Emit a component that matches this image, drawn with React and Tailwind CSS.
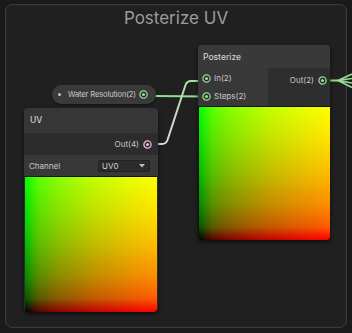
import React from "react";

const previewBg =
  "bg-[linear-gradient(to_right,#000_0%,rgb(89,0,0)_10%,rgb(137,0,0)_25%,rgb(188,0,0)_50%,rgb(225,0,0)_75%,#f00_100%),linear-gradient(to_top,#000_0%,rgb(0,89,0)_10%,rgb(0,137,0)_25%,rgb(0,188,0)_50%,rgb(0,225,0)_75%,#0f0_100%)] bg-blend-screen";

function Port({ color, className = "" }) {
  return (
    <svg width="9" height="9" viewBox="0 0 9 9" className={className}>
      <circle cx="4.5" cy="4.5" r="3.6" fill="#262626" stroke={color} strokeWidth="1.3" />
      <circle cx="4.5" cy="4.5" r="1.6" fill={color} />
    </svg>
  );
}

export default function App() {
  const font = { fontFamily: "Inter, 'Liberation Sans', sans-serif" };
  return (
    <div className="relative w-[352px] h-[333px] overflow-hidden bg-[#1a1a1a]" style={font}>
      {/* group frame */}
      <div className="ml-[5px] mt-[4px] w-[342px] h-[324px] rounded-[7px] border border-[#3b3b3b] bg-[#202020] shadow-[inset_0_0_0_1px_#262626]">
        <div className="pt-[2px] text-center text-[17px] leading-[22px] text-[#9c9c9c]">Posterize UV</div>
      </div>

      {/* wires */}
      <svg className="absolute left-0 top-0" width="352" height="333" viewBox="0 0 352 333">
        <defs>
          <linearGradient id="uvw" x1="150" y1="145" x2="205" y2="81" gradientUnits="userSpaceOnUse">
            <stop offset="0" stopColor="#e9d6e8" />
            <stop offset="1" stopColor="#9ee39c" />
          </linearGradient>
        </defs>
        <path d="M155 96 L205 96.5" stroke="#93dc93" strokeWidth="2" fill="none" />
        <path
          d="M150 144 H162 Q166 144 167.5 140 L185.5 85 Q187 81 191 81 H205"
          stroke="url(#uvw)"
          strokeWidth="2"
          fill="none"
        />
        <path d="M325 80.5 H339" stroke="#93dc93" strokeWidth="2" fill="none" />
        <path d="M338 80.5 L352 74 M338 80.5 L352 78.5 M338 80.5 L352 83 M338 80.5 L352 87.5" stroke="#93dc93" strokeWidth="1.6" fill="none" />
      </svg>

      {/* Water Resolution property */}
      <div className="absolute left-[52px] top-[85px] w-[104px] h-[19px] rounded-full bg-[#3a3a3a] flex items-center pl-[6px] pr-[8px] shadow-[0_1px_2px_rgba(0,0,0,0.5)]">
        <div className="w-[3px] h-[3px] rounded-full bg-[#9fe39c]" />
        <span className="ml-[7px] text-[7.6px] text-[#c8c8c8] tracking-[-0.15px] whitespace-nowrap">Water Resolution(2)</span>
        <Port color="#93dc93" className="ml-auto" />
      </div>

      {/* Posterize node */}
      <div className="absolute left-[198px] top-[45px] w-[132px] rounded-[4px] bg-[#2e2e2e] shadow-[0_2px_4px_rgba(0,0,0,0.6)]">
        <div className="h-[23px] rounded-t-[4px] bg-[#393939] flex items-center pl-[5px] pt-[1px] text-[8.5px] text-[#cfcfcf] font-medium">
          Posterize
        </div>
        <div className="flex h-[38px]">
          <div className="w-[70px] bg-[#383838] flex flex-col justify-center gap-[6px] pl-[4px]">
            <div className="flex items-center gap-[3px]">
              <Port color="#93dc93" />
              <span className="text-[8px] text-[#c8c8c8]">In(2)</span>
            </div>
            <div className="flex items-center gap-[3px]">
              <Port color="#93dc93" />
              <span className="text-[8px] text-[#c8c8c8]">Steps(2)</span>
            </div>
          </div>
          <div className="flex-1 bg-[#2e2e2e] flex items-start justify-end pt-[8px] pr-[3px] gap-[4px]">
            <span className="text-[8px] text-[#c8c8c8] leading-[9px]">Out(2)</span>
            <Port color="#93dc93" />
          </div>
        </div>
        <div className={`h-[134px] rounded-b-[4px] border-t border-l border-[#111] ${previewBg}`} />
      </div>

      {/* UV node */}
      <div className="absolute left-[24px] top-[108px] w-[134px] rounded-[4px] bg-[#2d2d2d] shadow-[0_2px_4px_rgba(0,0,0,0.6)]">
        <div className="h-[25px] rounded-t-[4px] bg-[#363636] flex items-center pl-[6px] text-[8.5px] text-[#cfcfcf] font-medium">
          UV
        </div>
        <div className="h-[22px] bg-[#2c2c2c] flex items-center justify-end pr-[6px] gap-[4px]">
          <span className="text-[8px] text-[#c8c8c8]">Out(4)</span>
          <Port color="#e8b8e2" />
        </div>
        <div className="h-[21px] bg-[#383838] flex items-center pl-[5px] pr-[8px]">
          <span className="text-[8px] text-[#c8c8c8]">Channel</span>
          <div className="ml-auto w-[52px] h-[12px] rounded-[2px] bg-[#2b2b2b] border border-[#232323] flex items-center pl-[3px] pr-[4px]">
            <span className="text-[8px] text-[#cfcfcf]">UV0</span>
            <svg width="6" height="4" viewBox="0 0 6 4" className="ml-auto">
              <path d="M0 0 H6 L3 3.5 Z" fill="#bdbdbd" />
            </svg>
          </div>
        </div>
        <div className={`h-[136px] mx-[1px] rounded-b-[4px] border-t border-[#111] ${previewBg}`} />
      </div>
    </div>
  );
}
